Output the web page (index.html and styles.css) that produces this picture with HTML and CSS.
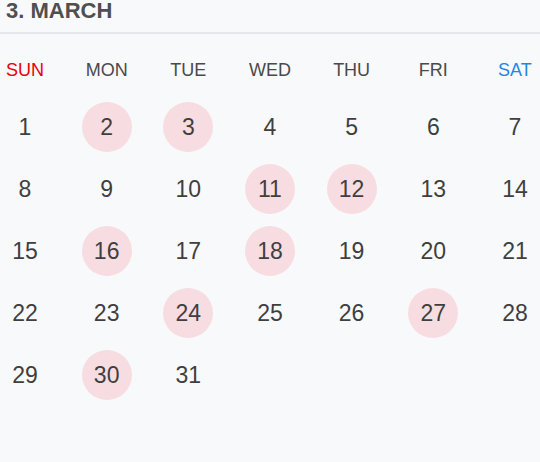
FILE: index.html
```html
<!DOCTYPE html>
<html>
<head>
<meta charset="utf-8">
<link rel="stylesheet" href="styles.css">
</head>
<body>
<div class="cal">
  <div class="title">3. MARCH</div>
  <div class="week">
    <div class="wd sun">SUN</div>
    <div class="wd">MON</div>
    <div class="wd">TUE</div>
    <div class="wd">WED</div>
    <div class="wd">THU</div>
    <div class="wd">FRI</div>
    <div class="wd sat">SAT</div>
  </div>
  <div class="days">
    <div class="row">
      <div class="d">1</div><div class="d on">2</div><div class="d on">3</div><div class="d">4</div><div class="d">5</div><div class="d">6</div><div class="d">7</div>
    </div>
    <div class="row">
      <div class="d">8</div><div class="d">9</div><div class="d">10</div><div class="d on">11</div><div class="d on">12</div><div class="d">13</div><div class="d">14</div>
    </div>
    <div class="row">
      <div class="d">15</div><div class="d on">16</div><div class="d">17</div><div class="d on">18</div><div class="d">19</div><div class="d">20</div><div class="d">21</div>
    </div>
    <div class="row">
      <div class="d">22</div><div class="d">23</div><div class="d on">24</div><div class="d">25</div><div class="d">26</div><div class="d on">27</div><div class="d">28</div>
    </div>
    <div class="row">
      <div class="d">29</div><div class="d on">30</div><div class="d">31</div><div class="d"></div><div class="d"></div><div class="d"></div><div class="d"></div>
    </div>
  </div>
</div>
</body>
</html>
```

FILE: styles.css
```css
html, body {
  margin: 0;
  padding: 0;
  background: #f8f9fb;
  height: 100%;
}
.cal {
  font-family: "Liberation Sans", Arial, sans-serif;
  width: 540px;
}
.title {
  box-sizing: border-box;
  height: 34px;
  padding: 0 6px;
  font-size: 22px;
  line-height: 21px;
  font-weight: bold;
  color: #4f4f4f;
  border-bottom: 2px solid #e6e7ea;
}
.week {
  display: flex;
  justify-content: space-between;
  padding-top: 25px;
}
.wd {
  width: 50px;
  text-align: center;
  font-size: 18px;
  line-height: 22px;
  color: #4a4a4a;
  white-space: nowrap;
}
.wd.sun { color: #e8000b; }
.wd.sat { color: #1e88e5; }
.days {
  display: flex;
  flex-direction: column;
  gap: 12px;
  padding-top: 21px;
}
.row {
  display: flex;
  justify-content: space-between;
}
.d {
  width: 50px;
  height: 50px;
  border-radius: 50%;
  display: flex;
  align-items: center;
  justify-content: center;
  font-size: 23px;
  color: #3f3f3f;
}
.d.on { background: #f7dde1; }
```
